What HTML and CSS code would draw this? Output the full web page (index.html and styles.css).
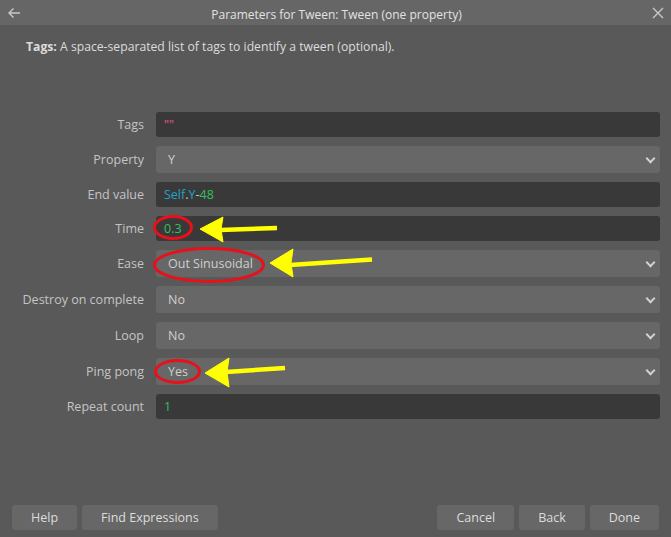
FILE: index.html
```html
<!DOCTYPE html>
<html>
  <head>
    <title>Parameters for Tween</title>
    <link rel="stylesheet" href="styles.css">
  </head>
  <body>
    <div class="dialog">
      <div class="title-bar">
        <svg class="title-icon" width="14" height="12" viewBox="0 0 14 12">
          <path d="M13 6H2M6.5 1.5L2 6l4.5 4.5" fill="none" stroke="#c8c8c8" stroke-width="1.4"/>
        </svg>
        <span class="title-text">Parameters for Tween: Tween (one property)</span>
        <svg class="title-icon" width="12" height="12" viewBox="0 0 12 12">
          <path d="M1 1l10 10M11 1L1 11" fill="none" stroke="#c8c8c8" stroke-width="1.4"/>
        </svg>
      </div>
      <p class="description"><b>Tags:</b> A space-separated list of tags to identify a tween (optional).</p>
      <div class="params">
        <label class="param-label">Tags</label>
        <div class="field field-input"><span class="tok-string">""</span></div>

        <label class="param-label">Property</label>
        <div class="field field-select">Y</div>

        <label class="param-label">End value</label>
        <div class="field field-input"><span class="tok-obj">Self</span>.<span class="tok-obj">Y</span>-<span class="tok-num">48</span></div>

        <label class="param-label">Time</label>
        <div class="field field-input"><span class="tok-num">0.3</span></div>

        <label class="param-label">Ease</label>
        <div class="field field-select">Out Sinusoidal</div>

        <label class="param-label">Destroy on complete</label>
        <div class="field field-select">No</div>

        <label class="param-label">Loop</label>
        <div class="field field-select">No</div>

        <label class="param-label">Ping pong</label>
        <div class="field field-select">Yes</div>

        <label class="param-label">Repeat count</label>
        <div class="field field-input"><span class="tok-num">1</span></div>
      </div>
      <div class="footer">
        <div class="btn">Help</div>
        <div class="btn">Find Expressions</div>
        <div class="footer-spacer"></div>
        <div class="btn">Cancel</div>
        <div class="btn">Back</div>
        <div class="btn">Done</div>
      </div>
    </div>
    <!-- annotations drawn over the screenshot -->
    <svg class="annotations" width="671" height="537" viewBox="0 0 671 537">
      <g fill="none" stroke="#e8101a" stroke-width="3">
        <ellipse cx="173" cy="227.5" rx="18.5" ry="11"/>
        <ellipse cx="209" cy="265" rx="54.5" ry="16.5"/>
        <ellipse cx="177.5" cy="371.5" rx="22" ry="11"/>
      </g>
      <g fill="#ffff00" stroke="#ffff00">
        <polygon points="200,229 223,217 221,229 223,242"/>
        <line x1="220" y1="230" x2="277" y2="228" stroke-width="4.5"/>
        <polygon points="270,263 293,249 291,263 293,277"/>
        <line x1="290" y1="265" x2="372" y2="259.5" stroke-width="4.5"/>
        <polygon points="205,373 229,358 227,372 229,387"/>
        <line x1="226" y1="372" x2="285" y2="368" stroke-width="4.5"/>
      </g>
    </svg>
  </body>
</html>
```
FILE: styles.css
```css
body {
  margin: 0;
  background-color: #595959;
  font-family: "Open Sans", "Noto Sans", sans-serif;
  font-size: 12.5px;
}
.dialog {
  display: flex;
  flex-flow: column nowrap;
  height: 537px;
}
.title-bar {
  display: flex;
  flex-flow: row nowrap;
  align-items: center;
  height: 25px;
  padding: 0 7px;
  background-color: #666;
  color: #e2e2e2;
  font-size: 12px;
}
.title-text {
  flex: 1;
  text-align: center;
  padding-top: 4px;
}
.title-icon {
  display: block;
}
.description {
  margin: 13px 0 0 26px;
  color: #dcdcdc;
  font-size: 12.2px;
}
.description b {
  font-weight: 700;
}
.params {
  display: grid;
  grid-template-columns: 144px 1fr;
  column-gap: 12px;
  row-gap: 9px;
  align-items: center;
  margin-top: 57px;
  padding-right: 11px;
}
.param-label {
  text-align: right;
  color: #c4c4c4;
}
.field {
  display: flex;
  align-items: center;
  border-radius: 3px;
  box-sizing: border-box;
}
.field-input {
  height: 25px;
  padding-left: 8px;
  background-color: #393939;
  color: #c8c8c8;
}
.field-select {
  position: relative;
  height: 27px;
  padding-left: 12px;
  background-color: #676767;
  color: #cfcfcf;
}
.field-select::after {
  content: "";
  position: absolute;
  right: 6px;
  top: 9px;
  width: 5px;
  height: 5px;
  border-right: 2px solid #cfcfcf;
  border-bottom: 2px solid #cfcfcf;
  transform: rotate(45deg);
}
.tok-string {
  color: #e2559c;
}
.tok-obj {
  color: #22a3c6;
}
.tok-num {
  color: #33c060;
}
.footer {
  display: flex;
  flex-flow: row nowrap;
  gap: 5px;
  margin-top: auto;
  padding: 0 12px 7px 12px;
}
.footer-spacer {
  flex: 1;
}
.btn {
  display: flex;
  align-items: center;
  justify-content: center;
  height: 25px;
  padding: 0 19px;
  border-radius: 3px;
  background-color: #676767;
  color: #dcdcdc;
}
.annotations {
  position: absolute;
  top: 0;
  left: 0;
  pointer-events: none;
}
```
